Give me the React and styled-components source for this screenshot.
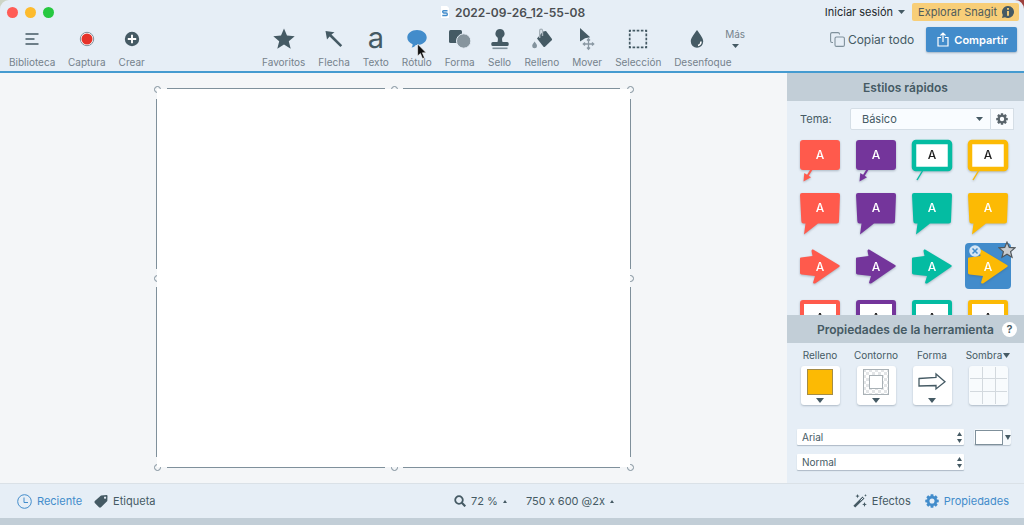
import React from "react";
import styled, { createGlobalStyle, css } from "styled-components";

const colors = {
  chrome: "#e6eef6",
  band: "#c2ced7",
  canvas: "#f4f6f8",
  ink: "#455a64",
  label: "#75828c",
  accent: "#428ccb",
  line: "#7f909b",
  red: "#ff5a4c",
  purple: "#74359b",
  teal: "#04bca2",
  yellow: "#fcba04",
};

const GlobalStyle = createGlobalStyle`
  * {
    box-sizing: border-box;
  }

  body {
    margin: 0;
    background: linear-gradient(90deg, #cdd5c6 60%, #9c3f3c);
    color: ${colors.ink};
    font-family: Inter, "Liberation Sans", sans-serif;
    font-feature-settings: "calt" 0;
    font-size: 12px;
  }

  button,
  select {
    margin: 0;
    padding: 0;
    border: 0;
    background: none;
    color: inherit;
    font: inherit;
    font-feature-settings: inherit;
  }
`;

const Window = styled.div`
  display: flex;
  flex-direction: column;
  height: 100vh;
  overflow: hidden;
  border-radius: 9px 9px 0 0;
  background: ${colors.chrome};
`;

/* Header */

const Header = styled.header`
  border-bottom: 2px solid #459bd0;
`;

const TitleBar = styled.div`
  display: grid;
  grid-template-columns: 1fr auto 1fr;
  align-items: center;
  height: 24px;
  padding: 0 5px 0 7px;
`;

const Lights = styled.div`
  display: flex;
  gap: 7px;
`;

const Light = styled.button`
  width: 11px;
  height: 11px;
  border-radius: 50%;
  background: ${(props) => props.$color};
`;

const Title = styled.h1`
  display: flex;
  align-items: center;
  gap: 6px;
  margin: 0;
  color: #4b4f52;
  font-size: 12px;
  font-weight: 600;
`;

const Account = styled.div`
  display: flex;
  justify-content: flex-end;
  align-items: center;
  gap: 7px;
`;

const SignIn = styled.button`
  display: flex;
  align-items: center;
  gap: 5px;
  color: #22282c;
  font-size: 11px;
  white-space: nowrap;
`;

const Explore = styled.a`
  display: flex;
  align-items: center;
  gap: 5px;
  height: 18px;
  padding: 0 5px 0 6px;
  border-radius: 2px;
  background: #f8ce78;
  color: #4f5b5c;
  font-size: 11px;
  text-decoration: none;
  white-space: nowrap;
`;

const Toolbar = styled.div`
  display: flex;
  align-items: flex-start;
  padding: 3px 7px 2px 9px;
`;

const FileTools = styled.div`
  display: flex;
  flex: 0 0 253px;
  gap: 13px;
`;

const DrawTools = styled.nav`
  display: flex;
  flex: 1;
  gap: 13px;
`;

const Tool = styled.button`
  position: relative;
  display: flex;
  flex-direction: column;
  align-items: safe center;
  gap: 4px;
  max-width: 46px;
  color: ${colors.label};
  font-size: 10px;
  line-height: 14px;
  white-space: nowrap;

  > svg {
    overflow: visible;
  }
`;

const More = styled.button`
  display: flex;
  flex-direction: column;
  align-items: center;
  gap: 3px;
  align-self: flex-start;
  margin-left: -8px;
  color: ${colors.label};
  font-size: 10px;
  line-height: 14px;
`;

const Pointer = styled.svg`
  position: absolute;
  top: 16px;
  left: 50%;
`;

const Actions = styled.div`
  display: flex;
  align-items: center;
  gap: 12px;
`;

const CopyAll = styled.button`
  display: flex;
  align-items: center;
  gap: 3px;
  white-space: nowrap;
`;

const Share = styled.button`
  display: flex;
  align-items: center;
  justify-content: center;
  gap: 5px;
  height: 25px;
  padding: 0 9px 0 11px;
  border-radius: 2px;
  background: ${colors.accent};
  box-shadow: 0 1px 2px rgba(60, 90, 120, 0.4);
  color: #fff;
  font-size: 11px;
  font-weight: 600;
`;

/* Workspace */

const Main = styled.main`
  display: flex;
  flex: 1;
  min-height: 0;
`;

const Canvas = styled.section`
  display: flex;
  flex: 1;
  align-items: center;
  justify-content: center;
  background: ${colors.canvas};
`;

const Artboard = styled.div`
  position: relative;
  isolation: isolate;
  width: 60%;
  aspect-ratio: 5 / 4;
  background: ${colors.canvas};
`;

const Sheet = styled.div`
  height: 100%;
  background: #fff;
`;

const Edge = styled.span`
  position: absolute;
  background: ${colors.line};
  ${(props) =>
    props.$side === "top" || props.$side === "bottom"
      ? css`
          ${props.$side}: -1px;
          left: ${props.$second ? "calc(50% + 9px)" : "10px"};
          right: ${props.$second ? "10px" : "calc(50% + 9px)"};
          height: 1px;
        `
      : css`
          ${props.$side}: -1px;
          top: ${props.$second ? "calc(50% + 9px)" : "10px"};
          bottom: ${props.$second ? "10px" : "calc(50% + 9px)"};
          width: 1px;
        `}
`;

const Handle = styled.span`
  position: absolute;
  z-index: -1;
  left: ${(props) => props.$x};
  top: ${(props) => props.$y};
  width: 7px;
  height: 7px;
  margin: -3px;
  border: 1px solid ${colors.line};
  border-radius: 50%;
`;

/* Side panel */

const Panel = styled.aside`
  display: flex;
  flex-direction: column;
  flex: 0 0 237px;
`;

const PanelTitle = styled.h2`
  display: grid;
  grid-template-columns: 1fr auto 1fr;
  align-items: center;
  flex: none;
  height: 28px;
  margin: 0;
  background: ${colors.band};
  font-size: 12px;
  font-weight: 600;
  white-space: nowrap;

  span {
    grid-column: 2;
  }
`;

const Help = styled.button`
  justify-self: end;
  width: 15px;
  height: 15px;
  margin-right: 7px;
  border-radius: 50%;
  background: #fff;
  font-size: 11px;
  font-weight: 600;
  line-height: 15px;
`;

const ThemeRow = styled.div`
  display: flex;
  align-items: center;
  flex: none;
  height: 36px;
  padding: 0 10px 0 13px;
  font-size: 11px;

  label {
    flex: 0 0 50px;
  }
`;

const SelectBox = styled.div`
  display: grid;
  flex: 1;
  align-items: center;

  > * {
    grid-area: 1 / 1;
  }

  > svg {
    justify-self: end;
    margin-right: ${(props) => props.$inset}px;
    pointer-events: none;
  }
`;

const ThemeSelect = styled.select`
  width: 100%;
  height: 22px;
  padding-left: 11px;
  appearance: none;
  border: 1px solid #d5dee6;
  border-radius: 2px 0 0 2px;
  background: #f9fcff;
`;

const ThemeSettings = styled.button`
  display: flex;
  align-items: center;
  justify-content: center;
  width: 23px;
  height: 22px;
  border: 1px solid #d5dee6;
  border-left: 0;
  background: #f9fcff;
`;

const StyleGrid = styled.div`
  display: grid;
  grid-template-columns: repeat(4, 46px);
  grid-auto-rows: 46px;
  gap: 7px 10px;
  align-content: start;
  flex: 1;
  min-height: 0;
  padding-left: 10px;
  overflow: hidden;
`;

const Swatch = styled.button`
  position: relative;
  height: 46px;
  border-radius: 4px;
  background: ${(props) => (props.$selected ? colors.accent : "none")};

  > svg:first-child {
    display: block;
    filter: drop-shadow(0 1px 1px rgba(60, 80, 100, 0.35));
  }
`;

const RemoveBadge = styled.svg`
  position: absolute;
  top: 2px;
  left: 4px;
`;

const StarBadge = styled.svg`
  position: absolute;
  top: -2px;
  right: -5px;
`;

const ToolProps = styled.div`
  display: flex;
  flex-direction: column;
  flex: none;
  gap: 9px;
  height: 140px;
  padding: 5px 13px 0 10px;
  overflow: hidden;
  font-size: 10px;
`;

const PropRow = styled.div`
  display: grid;
  grid-template-columns: repeat(4, 46px);
  gap: 10px;
  margin-bottom: 15px;
`;

const Prop = styled.div`
  display: flex;
  flex-direction: column;
  align-items: center;
  gap: 4px;
  line-height: 14px;
  white-space: nowrap;

  span {
    display: flex;
    align-items: center;
    gap: 1px;
  }
`;

const PropButton = styled.button`
  display: flex;
  flex-direction: column;
  align-items: center;
  justify-content: ${(props) => (props.$plain ? "center" : "flex-start")};
  gap: 3px;
  width: 39px;
  height: 39px;
  padding-top: ${(props) => (props.$plain ? 0 : 3)}px;
  border-radius: 3px;
  background: ${(props) => (props.$plain ? "#f8fbfd" : "#fff")};
  box-shadow: 0 1px 2px rgba(70, 90, 110, 0.35);
`;

const FontRow = styled.div`
  display: grid;
  grid-template-columns: 1fr 37px;
  gap: 10px;
  align-items: center;
`;

const FontSelect = styled.select`
  width: 100%;
  height: 16px;
  padding-left: 5px;
  appearance: none;
  border-radius: 1px;
  background: #fff;
  box-shadow: 0 1px 1px rgba(70, 90, 110, 0.35);
`;

const ColorWell = styled.button`
  display: flex;
  align-items: center;
  gap: 2px;
  height: 16px;
  padding-left: 1px;
  border-radius: 2px;
  background: #f5f9fc;
  box-shadow: 0 1px 1px rgba(70, 90, 110, 0.3);

  &::before {
    content: "";
    width: 27px;
    height: 13px;
    border: 1px solid ${colors.line};
    background: #fff;
  }
`;

/* Footer */

const Footer = styled.footer`
  display: grid;
  grid-template-columns: 1fr auto 1fr;
  align-items: center;
  height: 42px;
  padding: 0 15px 0 17px;
  border-top: 1px solid #dae1e7;
  border-bottom: 7px solid ${colors.band};
`;

const FooterGroup = styled.div`
  display: flex;
  align-items: center;
  gap: ${(props) => props.$gap}px;
  justify-content: ${(props) => (props.$end ? "flex-end" : "flex-start")};
  padding-left: ${(props) => props.$indent || 0}px;
`;

const FooterButton = styled.button`
  display: flex;
  align-items: center;
  gap: 5px;
  color: ${(props) => (props.$active ? colors.accent : colors.ink)};
  font-size: 11px;
  white-space: nowrap;
`;

const Caret = ({ width = 8, height = 5, up }) => (
  <svg width={width} height={height} viewBox="0 0 8 5" preserveAspectRatio="none">
    <path d={up ? "M0 5h8L4 0z" : "M0 0h8L4 5z"} fill={colors.ink} />
  </svg>
);

const Stepper = () => (
  <svg width="5" height="11" viewBox="0 0 5 11">
    <path d="M0 4h5L2.500 0zM0 7h5l-2.500 4z" fill={colors.ink} />
  </svg>
);

const Gear = ({ size, color }) => (
  <svg width={size} height={size} viewBox="0 0 16 16">
    <circle cx="8" cy="8" r="4.300" fill="none" stroke={color} strokeWidth="2.800" />
    {[0, 45, 90, 135, 180, 225, 270, 315].map((angle) => (
      <path
        key={angle}
        d="M6 3.500 6.500.3h3L10 3.500z"
        fill={color}
        transform={`rotate(${angle} 8 8)`}
      />
    ))}
  </svg>
);

const STAR =
  "M12 1.500l3 7.100 7.700.6-5.900 5 1.900 7.500-6.700-4.100-6.700 4.100 1.900-7.500-5.900-5 7.700-.6z";

const icons = {
  library: (
    <path d="M5.500 7h13M5.500 12h9M5.500 17h13" stroke={colors.ink} strokeWidth="1.500" />
  ),
  capture: (
    <>
      <circle cx="12" cy="12" r="6.700" fill="#fff" stroke={colors.line} />
      <circle cx="12" cy="12" r="5.500" fill="#e63229" />
    </>
  ),
  create: (
    <>
      <circle cx="12" cy="12" r="7.200" fill={colors.ink} />
      <path d="M12 7.800v8.400M7.800 12h8.400" stroke="#fff" strokeWidth="1.900" />
    </>
  ),
  star: <path d={STAR} fill={colors.ink} />,
  arrow: (
    <path d="M3.500 4l9 1.200-3 2.400 10.700 10.700-1.800 1.800L7.600 9.400 5 12.500z" fill={colors.ink} />
  ),
  text: (
    <text x="12" y="20.500" textAnchor="middle" fontSize="29" fill={colors.ink}>
      a
    </text>
  ),
  callout: (
    <path
      d="M12 3c5.500 0 9.700 3.200 9.700 7.500S17.500 18 12 18l-1.200-.1c-1 1.400-2.300 2.400-4.200 2.600.8-1 1.100-2.100 1-3.300C4.400 15.900 2.300 13.500 2.300 10.500 2.300 6.200 6.500 3 12 3z"
      fill={colors.accent}
    />
  ),
  shape: (
    <>
      <rect x="1" y="3" width="13" height="13" rx="1.500" fill={colors.ink} />
      <circle cx="15.700" cy="14" r="7.200" fill="#87959e" stroke={colors.chrome} />
    </>
  ),
  stamp: (
    <>
      <path
        d="M12 2a4.600 4.600 0 0 1 2.700 8.300c-.7.700-.9 2.400-.2 4.700h4.700q1.500 0 1.500 1.500V17.500q0 1.500-1.500 1.500H4.800q-1.500 0-1.500-1.500V16.500q0-1.500 1.500-1.500h4.700c.7-2.300.5-4-.2-4.700A4.600 4.600 0 0 1 12 2z"
        fill={colors.ink}
      />
      <path d="M4.500 21.300h15" stroke={colors.line} strokeWidth="1.600" />
    </>
  ),
  fill: (
    <>
      <path d="M7 11.500 13 4.500l3-.5 6 8q.3.700-.3 1.300L15 19.700q-.8.600-1.500 0z" fill={colors.ink} />
      <path d="M9.700 11V3.800c0-2.300 2.800-2.300 2.800 0V9" fill="none" stroke="#a5b0b8" strokeWidth="1.400" />
      <path d="M4.600 14.500c1.600 2.200 2.400 3.200 2.400 4.400a2.400 2.400 0 0 1-4.800 0c0-1.200.8-2.200 2.400-4.400z" fill="#83939e" />
    </>
  ),
  move: (
    <>
      <path d="M5 1l10.200 9.300-5.100 1L5 14.500z" fill={colors.ink} />
      <path
        d="M13.500 12v10M8.500 17h10M12 13.500l1.500-1.700 1.500 1.700M12 20.500l1.500 1.700 1.500-1.700M10 15.500 8.300 17l1.700 1.500M17 15.500l1.700 1.500-1.700 1.500"
        fill="none"
        stroke="#8a98a3"
        strokeWidth="1.300"
      />
    </>
  ),
  selection: (
    <rect
      x="3.700"
      y="3.700"
      width="16.600"
      height="16.600"
      fill="none"
      stroke={colors.ink}
      strokeWidth="1.700"
      strokeDasharray="2.600 1.550"
      strokeDashoffset="1.300"
    />
  ),
  blur: (
    <>
      <path d="M12 3c3.600 5.200 6.200 8 6.200 11.500a6.200 6.200 0 0 1-12.400 0C5.800 11 8.400 8.200 12 3z" fill={colors.ink} />
      <path d="M16 14.500c0 2-1.200 3.500-3 3.900" fill="none" stroke="#fff" strokeWidth="1.500" />
    </>
  ),
};

const Icon = ({ name }) => (
  <svg width="24" height="24" viewBox="0 0 24 24">
    {icons[name]}
  </svg>
);

const fileTools = [
  ["library", "Biblioteca"],
  ["capture", "Captura"],
  ["create", "Crear"],
];

const drawTools = [
  ["star", "Favoritos"],
  ["arrow", "Flecha"],
  ["text", "Texto"],
  ["callout", "Rótulo"],
  ["shape", "Forma"],
  ["stamp", "Sello"],
  ["fill", "Relleno"],
  ["move", "Mover"],
  ["selection", "Selección"],
  ["blur", "Desenfoque"],
];

const palette = [colors.red, colors.purple, colors.teal, colors.yellow];

const shapes = {
  boxArrow: (color) => (
    <>
      <rect x="3" y="3" width="40" height="30" rx="3" fill={color} />
      <path d="M14.500 32.500 10.500 39" stroke={color} strokeWidth="2" />
      <path d="M6.500 44.500 7.300 36l6.700 4.200z" fill={color} />
    </>
  ),
  boxOutline: (color) => (
    <>
      <rect x="5" y="5" width="36" height="27" rx="2" fill="#fff" stroke={color} strokeWidth="4.500" />
      <path d="M13.500 34 8 43" stroke={color} strokeWidth="1.400" />
    </>
  ),
  bubble: (color) => (
    <path
      d="M5 3h36a2 2 0 0 1 2 2l-1 26a2.500 2.500 0 0 1-2.500 2.500H21L7 44.500 8.500 33.500H7A2.500 2.500 0 0 1 4.300 31L3 5a2 2 0 0 1 2-2z"
      fill={color}
    />
  ),
  arrow: (color) => (
    <path
      d="M4 14.500 15.500 13l-1-5c0-1.500 1-2 2-1.200L42 22q1.500 1 0 2L18.500 40.300c-1.500.8-2.800 0-2.300-1.300L18 33 4.500 31.500Q3 31 3 30V15.500q0-1 1-1z"
      fill={color}
    />
  ),
  frame: (color) => (
    <rect x="5" y="6" width="36" height="30" rx="1" fill="#fff" stroke={color} strokeWidth="4" />
  ),
};

const rows = [
  ["boxArrow", "boxArrow", "boxOutline", "boxOutline"],
  ["bubble", "bubble", "bubble", "bubble"],
  ["arrow", "arrow", "arrow", "arrow"],
  ["frame", "frame", "frame", "frame"],
];

const baselines = { boxArrow: 22, boxOutline: 22, bubble: 22, arrow: 28, frame: 26 };

const StyleSwatch = ({ kind, color, selected }) => (
  <Swatch $selected={selected} aria-pressed={selected}>
    <svg width="46" height="46" viewBox="0 0 46 46">
      {shapes[kind](color)}
      <text
        x="23"
        y={baselines[kind]}
        textAnchor="middle"
        fontSize="12"
        fontWeight="500"
        fill={kind === "boxOutline" || kind === "frame" ? "#222" : "#fff"}
      >
        A
      </text>
    </svg>
    {selected && (
      <>
        <RemoveBadge width="12" height="12" viewBox="0 0 12 12">
          <circle cx="6" cy="6" r="5.800" fill="#d4e5f3" />
          <path d="M3.500 3.500l5 5m0-5l-5 5" stroke={colors.accent} strokeWidth="1.500" />
        </RemoveBadge>
        <StarBadge width="18" height="18" viewBox="0 0 24 24">
          <path d={STAR} fill="#c9cccf" stroke="#4f565b" strokeWidth="1.600" />
        </StarBadge>
      </>
    )}
  </Swatch>
);

const sides = ["top", "right", "bottom", "left"];
const stops = ["0%", "50%", "100%"];

export default function App() {
  return (
    <>
      <GlobalStyle />
      <Window>
        <Header>
          <TitleBar>
            <Lights>
              <Light $color="#ff5c56" aria-label="Cerrar" />
              <Light $color="#fdbb2d" aria-label="Minimizar" />
              <Light $color="#27c840" aria-label="Ampliar" />
            </Lights>
            <Title>
              <svg width="8" height="12" viewBox="0 0 8 12">
                <path d="M0 0h6l2 2v10H0z" fill="#fff" />
                <path
                  d="M6.500 4.700H2.700q-1 0-1 1.100T2.700 7h2.600q1 0 1 1.200t-1 1.300H1.300"
                  fill="none"
                  stroke={colors.accent}
                  strokeWidth="1.400"
                />
              </svg>
              2022-09-26_12-55-08
            </Title>
            <Account>
              <SignIn>
                Iniciar sesión
                <Caret width={7} height={4} />
              </SignIn>
              <Explore href="#explorar">
                Explorar Snagit
                <svg width="12" height="12" viewBox="0 0 12 12">
                  <path d="M6 0a6 6 0 1 1-3 11.200L0 12l.8-3A6 6 0 0 1 6 0z" fill={colors.ink} />
                  <path d="M6 2v1.800M6 5v4.700" stroke="#f8ce78" strokeWidth="1.900" />
                </svg>
              </Explore>
            </Account>
          </TitleBar>
          <Toolbar>
            <FileTools>
              {fileTools.map(([name, label]) => (
                <Tool key={name}>
                  <Icon name={name} />
                  {label}
                </Tool>
              ))}
            </FileTools>
            <DrawTools>
              {drawTools.map(([name, label]) => (
                <Tool key={name}>
                  <Icon name={name} />
                  {label}
                  {name === "callout" && (
                    <Pointer width="10" height="17" viewBox="0 0 10 17">
                      <path
                        d="M.6 1v12l2.800-2.500L5.500 15.600l2-.8-2.100-5h3.800z"
                        fill="#111"
                        stroke="#fff"
                        strokeWidth=".6"
                      />
                    </Pointer>
                  )}
                </Tool>
              ))}
              <More>
                Más
                <Caret width={7} height={4} />
              </More>
            </DrawTools>
            <Actions>
              <CopyAll>
                <svg width="15" height="15" viewBox="0 0 15 15" fill="none" stroke={colors.line} strokeWidth="1.100">
                  <path d="M3 10.500H2A1.500 1.500 0 0 1 .6 9V2A1.500 1.500 0 0 1 2 .6h6A1.500 1.500 0 0 1 9.500 2v.5" />
                  <rect x="5" y="5" width="9.400" height="9.400" rx="1.500" />
                </svg>
                Copiar todo
              </CopyAll>
              <Share>
                <svg width="12" height="15" viewBox="0 0 12 15" fill="none" stroke="#fff" strokeWidth="1.200">
                  <path d="M4 5.500H1v8.500h10V5.500H8M6 10V1M3.500 3.500 6 1l2.500 2.500" />
                </svg>
                Compartir
              </Share>
            </Actions>
          </Toolbar>
        </Header>

        <Main>
          <Canvas>
            <Artboard>
              {stops.map((x) =>
                stops.map((y) => <Handle key={x + y} $x={x} $y={y} />)
              )}
              <Sheet />
              {sides.map((side) => (
                <React.Fragment key={side}>
                  <Edge $side={side} />
                  <Edge $side={side} $second />
                </React.Fragment>
              ))}
            </Artboard>
          </Canvas>

          <Panel>
            <PanelTitle>
              <span>Estilos rápidos</span>
            </PanelTitle>
            <ThemeRow>
              <label htmlFor="theme">Tema:</label>
              <SelectBox $inset={8}>
                <ThemeSelect id="theme">
                  <option>Básico</option>
                </ThemeSelect>
                <Caret width={7} height={4} />
              </SelectBox>
              <ThemeSettings aria-label="Opciones del tema">
                <Gear size={12} color="#59646b" />
              </ThemeSettings>
            </ThemeRow>
            <StyleGrid>
              {rows.map((row, r) =>
                row.map((kind, c) => (
                  <StyleSwatch
                    key={`${r}-${c}`}
                    kind={kind}
                    color={palette[c]}
                    selected={r === 2 && c === 3}
                  />
                ))
              )}
            </StyleGrid>
            <PanelTitle>
              <span>Propiedades de la herramienta</span>
              <Help>?</Help>
            </PanelTitle>
            <ToolProps>
              <PropRow>
                <Prop>
                  <span>Relleno</span>
                  <PropButton aria-label="Relleno">
                    <svg width="26" height="26">
                      <rect x=".5" y=".5" width="25" height="25" fill={colors.yellow} stroke="#a58c45" />
                    </svg>
                    <Caret />
                  </PropButton>
                </Prop>
                <Prop>
                  <span>Contorno</span>
                  <PropButton aria-label="Contorno">
                    <svg width="26" height="26">
                      <defs>
                        <pattern id="checks" width="6" height="6" patternUnits="userSpaceOnUse">
                          <path d="M0 0h3v3H0zM3 3h3v3H3z" fill="#e3e5e7" />
                        </pattern>
                      </defs>
                      <rect x=".5" y=".5" width="25" height="25" fill="url(#checks)" stroke="#a9b1b6" />
                      <rect x="6.500" y="6.500" width="13" height="13" fill="#fff" stroke="#a9b1b6" />
                    </svg>
                    <Caret />
                  </PropButton>
                </Prop>
                <Prop>
                  <span>Forma</span>
                  <PropButton aria-label="Forma">
                    <svg width="28" height="26" viewBox="0 0 28 26">
                      <path
                        d="M1 9.500l17-1V5l9 7.800-9 7.200v-3.500l-17 .5z"
                        fill="#fff"
                        stroke={colors.ink}
                        strokeWidth="1.300"
                      />
                    </svg>
                    <Caret />
                  </PropButton>
                </Prop>
                <Prop>
                  <span>
                    Sombra
                    <Caret width={7} />
                  </span>
                  <PropButton $plain aria-label="Sombra">
                    <svg width="39" height="39">
                      <path d="M13.500 1v37M26.500 1v37M1 12.500h37M1 25.500h37" stroke="#d3d9de" />
                    </svg>
                  </PropButton>
                </Prop>
              </PropRow>
              <FontRow>
                <SelectBox $inset={2}>
                  <FontSelect aria-label="Fuente">
                    <option>Arial</option>
                  </FontSelect>
                  <Stepper />
                </SelectBox>
                <ColorWell aria-label="Color del texto">
                  <Caret width={6} />
                </ColorWell>
              </FontRow>
              <FontRow>
                <SelectBox $inset={2}>
                  <FontSelect aria-label="Estilo de fuente">
                    <option>Normal</option>
                  </FontSelect>
                  <Stepper />
                </SelectBox>
              </FontRow>
            </ToolProps>
          </Panel>
        </Main>

        <Footer>
          <FooterGroup $gap={12}>
            <FooterButton $active>
              <svg width="15" height="15" viewBox="0 0 15 15" fill="none" stroke={colors.accent}>
                <circle cx="7.500" cy="7.500" r="6.800" />
                <path d="M7 3.500v5h4" />
              </svg>
              Reciente
            </FooterButton>
            <FooterButton>
              <svg width="14" height="14" viewBox="0 0 14 14">
                <path
                  fillRule="evenodd"
                  d="M7 1.500 12.500 1q1 0 1 1L13.300 7 7 13.300q-1 .7-2 0L.8 9q-.8-1 0-2zM11 2.600a1.100 1.100 0 1 0 .1 0z"
                  fill={colors.ink}
                />
              </svg>
              Etiqueta
            </FooterButton>
          </FooterGroup>
          <FooterGroup $gap={19} $indent={42}>
            <FooterButton>
              <svg width="12" height="12" viewBox="0 0 12 12" fill="none" stroke={colors.ink}>
                <circle cx="5" cy="5" r="3.800" strokeWidth="1.800" />
                <path d="M7.800 7.800l3.500 3.500" strokeWidth="2.200" />
              </svg>
              72 %
              <Caret width={4} height={3} up />
            </FooterButton>
            <FooterButton>
              750 x 600 @2x
              <Caret width={4} height={3} up />
            </FooterButton>
          </FooterGroup>
          <FooterGroup $gap={14} $end>
            <FooterButton>
              <svg width="14" height="14" viewBox="0 0 14 14">
                <path d="M1.300 12.700 10.500 3.500" stroke={colors.ink} strokeWidth="2.600" />
                <path d="M7.500 6.500l2.800-2.800" stroke={colors.chrome} />
                <path
                  d="M4.500 0l.6 1.500 1.500.6-1.500.6-.6 1.500-.6-1.500-1.500-.6 1.500-.6zM11.500 8l.7 1.700 1.700.7-1.700.7-.7 1.800-.7-1.800-1.700-.7 1.700-.7zM12.500 0l.4 1 1 .4-1 .4-.4 1-.4-1-1-.4 1-.4z"
                  fill={colors.ink}
                />
              </svg>
              Efectos
            </FooterButton>
            <FooterButton $active>
              <Gear size={14} color={colors.accent} />
              Propiedades
            </FooterButton>
          </FooterGroup>
        </Footer>
      </Window>
    </>
  );
}
